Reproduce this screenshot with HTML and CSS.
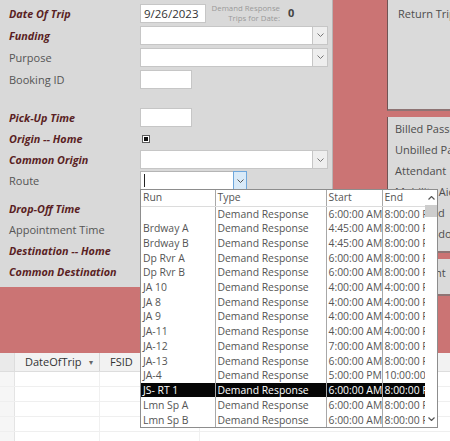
FILE: index.html
```html
<!DOCTYPE html>
<html lang="en">
<head>
  <meta charset="UTF-8" />
  <link rel="stylesheet" href="styles.css">
</head>
<body>
  <div class="screen">
    <div class="top">
      <div class="form-panel">
        <div class="row">
          <div class="lbl req">Date Of Trip</div>
          <div class="textbox date">9/26/2023</div>
          <div class="count-note">Demand Response<br>Trips for Date:</div>
          <div class="count">0</div>
        </div>
        <div class="row">
          <div class="lbl req">Funding</div>
          <div class="combo wide"><span class="combo-text"></span><span class="combo-btn"><svg width="7" height="4" viewBox="0 0 7 4"><polyline points="0.5,0.5 3.5,3.5 6.5,0.5" fill="none" stroke="#777" stroke-width="1"/></svg></span></div>
        </div>
        <div class="row">
          <div class="lbl">Purpose</div>
          <div class="combo wide"><span class="combo-text"></span><span class="combo-btn"><svg width="7" height="4" viewBox="0 0 7 4"><polyline points="0.5,0.5 3.5,3.5 6.5,0.5" fill="none" stroke="#777" stroke-width="1"/></svg></span></div>
        </div>
        <div class="row">
          <div class="lbl">Booking ID</div>
          <div class="textbox small"></div>
        </div>
        <div class="spacer-lg"></div>
        <div class="row short">
          <div class="lbl req">Pick-Up Time</div>
          <div class="textbox small"></div>
        </div>
        <div class="row short">
          <div class="lbl req">Origin -- Home</div>
          <div class="check"><span></span></div>
        </div>
        <div class="row short">
          <div class="lbl req">Common Origin</div>
          <div class="combo wide"><span class="combo-text"></span><span class="combo-btn"><svg width="7" height="4" viewBox="0 0 7 4"><polyline points="0.5,0.5 3.5,3.5 6.5,0.5" fill="none" stroke="#777" stroke-width="1"/></svg></span></div>
        </div>
        <div class="row short">
          <div class="lbl">Route</div>
          <div class="combo route"><span class="combo-text"><i class="caret"></i></span><span class="combo-btn active"><svg width="7" height="4" viewBox="0 0 7 4"><polyline points="0.5,0.5 3.5,3.5 6.5,0.5" fill="none" stroke="#555" stroke-width="1"/></svg></span></div>
        </div>
        <div class="spacer-sm"></div>
        <div class="row short">
          <div class="lbl req">Drop-Off Time</div>
          <div class="textbox small"></div>
        </div>
        <div class="row short">
          <div class="lbl">Appointment Time</div>
          <div class="textbox small"></div>
        </div>
        <div class="row short">
          <div class="lbl req">Destination -- Home</div>
          <div class="check"><span></span></div>
        </div>
        <div class="row short">
          <div class="lbl req">Common Destination</div>
          <div class="combo wide"></div>
        </div>
      </div>

      <div class="side">
        <div class="side-box return">Return Trip</div>
        <div class="side-box billing">
          <div class="side-line">Billed Passengers</div>
          <div class="side-line">Unbilled Passengers</div>
          <div class="side-line">Attendant</div>
          <div class="side-line">Mobility Aid</div>
          <div class="side-line">Cancelled</div>
          <div class="side-line">Door-to-door</div>
        </div>
        <div class="side-box notes">
          <div class="side-line">Comment</div>
        </div>
      </div>
    </div>

    <!-- datasheet under the form -->
    <div class="datasheet">
      <div class="ds-head">
        <div class="ds-sel"></div>
        <div class="ds-col first">DateOfTrip <span class="ds-arrow">&#9662;</span></div>
        <div class="ds-col">FSID</div>
        <div class="ds-col">TripID</div>
        <div class="ds-col last">Stop</div>
      </div>
      <div class="ds-row"><div class="ds-sel"></div><div class="ds-cell first"></div><div class="ds-cell"></div></div>
      <div class="ds-row"><div class="ds-sel"></div><div class="ds-cell first"></div><div class="ds-cell"></div></div>
      <div class="ds-row"><div class="ds-sel"></div><div class="ds-cell first"></div><div class="ds-cell"></div></div>
      <div class="ds-row"><div class="ds-sel"></div><div class="ds-cell first"></div><div class="ds-cell"></div></div>
      <div class="ds-row"><div class="ds-sel"></div><div class="ds-cell first"></div><div class="ds-cell"></div></div>
    </div>

    <!-- open Route drop-down -->
    <div class="route-list">
      <table class="runs">
        <colgroup><col class="c-run"><col class="c-type"><col class="c-start"><col class="c-end"></colgroup>
        <thead>
          <tr><th>Run</th><th>Type</th><th>Start</th><th>End</th></tr>
        </thead>
        <tbody>
          <tr><td></td><td>Demand Response</td><td>6:00:00 AM</td><td>8:00:00 PM</td></tr>
          <tr><td>Brdway A</td><td>Demand Response</td><td>4:45:00 AM</td><td>8:00:00 PM</td></tr>
          <tr><td>Brdway B</td><td>Demand Response</td><td>4:45:00 AM</td><td>8:00:00 PM</td></tr>
          <tr><td>Dp Rvr A</td><td>Demand Response</td><td>6:00:00 AM</td><td>8:00:00 PM</td></tr>
          <tr><td>Dp Rvr B</td><td>Demand Response</td><td>6:00:00 AM</td><td>8:00:00 PM</td></tr>
          <tr><td>JA 10</td><td>Demand Response</td><td>4:00:00 AM</td><td>4:00:00 PM</td></tr>
          <tr><td>JA 8</td><td>Demand Response</td><td>4:00:00 AM</td><td>4:00:00 PM</td></tr>
          <tr><td>JA 9</td><td>Demand Response</td><td>4:00:00 AM</td><td>4:00:00 PM</td></tr>
          <tr><td>JA-11</td><td>Demand Response</td><td>4:00:00 AM</td><td>4:00:00 PM</td></tr>
          <tr><td>JA-12</td><td>Demand Response</td><td>7:00:00 AM</td><td>8:00:00 PM</td></tr>
          <tr><td>JA-13</td><td>Demand Response</td><td>6:00:00 AM</td><td>8:00:00 PM</td></tr>
          <tr><td>JA-4</td><td>Demand Response</td><td>5:00:00 PM</td><td>10:00:00 PM</td></tr>
          <tr class="selected"><td>JS- RT 1</td><td>Demand Response</td><td>6:00:00 AM</td><td>8:00:00 PM</td></tr>
          <tr><td>Lmn Sp A</td><td>Demand Response</td><td>6:00:00 AM</td><td>8:00:00 PM</td></tr>
          <tr><td>Lmn Sp B</td><td>Demand Response</td><td>6:00:00 AM</td><td>8:00:00 PM</td></tr>
        </tbody>
      </table>
      <div class="scrollbar">
        <svg class="sb-up" width="7" height="4" viewBox="0 0 7 4"><polyline points="0.5,3.5 3.5,0.5 6.5,3.5" fill="none" stroke="#555" stroke-width="1.2"/></svg>
        <div class="sb-thumb"></div>
        <svg class="sb-down" width="7" height="4" viewBox="0 0 7 4"><polyline points="0.5,0.5 3.5,3.5 6.5,0.5" fill="none" stroke="#555" stroke-width="1.2"/></svg>
      </div>
    </div>
  </div>
</body>
</html>
```

FILE: styles.css
```css
* {
  box-sizing: border-box;
}

body {
  margin: 0;
  width: 450px;
  height: 441px;
  overflow: hidden;
  background-color: #ffffff;
  font-family: 'Open Sans', 'Noto Sans', sans-serif;
  font-size: 11px;
  color: #4a4a4a;
}

.screen {
  position: relative;
  width: 450px;
  height: 441px;
  overflow: hidden;
}

.top {
  display: flex;
  align-items: flex-start;
  height: 353px;
  background-color: #cb7474;
}

/* left form */
.form-panel {
  width: 333px;
  height: 287px;
  flex-shrink: 0;
  background-color: #d9d9d9;
  border-right: 1px solid #b9b3b3;
  padding-top: 2px;
}

.row {
  display: flex;
  align-items: center;
  height: 22px;
}

.row.short {
  height: 21px;
}

.spacer-lg {
  height: 17px;
}

.spacer-sm {
  height: 7px;
}

.lbl {
  width: 140px;
  flex-shrink: 0;
  padding-left: 9px;
  color: #555555;
  white-space: nowrap;
}

.lbl.req {
  font-weight: 700;
  font-style: italic;
  color: #5a1f24;
  font-size: 10.8px;
}

.textbox {
  height: 19px;
  background-color: #ffffff;
  border: 1px solid #c6c6c6;
  padding: 1px 3px;
  color: #333333;
  line-height: 16px;
}

.textbox.date {
  width: 66px;
  font-size: 11.5px;
}

.textbox.small {
  width: 52px;
}

.count-note {
  width: 72px;
  margin-left: 2px;
  font-size: 7.8px;
  line-height: 10px;
  text-align: right;
  color: #9a9a9a;
}

.count {
  margin-left: 8px;
  font-weight: 700;
  color: #444444;
  padding-bottom: 2px;
}

.combo {
  display: flex;
  height: 19px;
  background-color: #ffffff;
  border: 1px solid #c6c6c6;
}

.combo.wide {
  width: 188px;
}

.combo.route {
  width: 107px;
  height: 20px;
  border-color: #b5b5b5;
}

.combo-text {
  flex: 1;
  display: flex;
  align-items: center;
  padding-left: 3px;
}

.caret {
  display: block;
  width: 1px;
  height: 13px;
  background-color: #222222;
}

.combo-btn {
  width: 15px;
  display: flex;
  align-items: center;
  justify-content: center;
  background-color: #eeeeee;
  border-left: 1px solid #c6c6c6;
}

.combo-btn.active {
  width: 14px;
  background-color: #d9eaf8;
  border: 1px solid #6ea7dc;
  margin: -1px -1px -1px 0;
}

.check {
  width: 8px;
  height: 8px;
  margin-left: 2px;
  border: 1px solid #5c5c5c;
  background-color: #ffffff;
  padding: 1px;
}

.check span {
  display: block;
  width: 100%;
  height: 100%;
  background-color: #111111;
}

/* right side sub-form boxes */
.side {
  margin-left: 54px;
  width: 63px;
  display: flex;
  flex-direction: column;
  gap: 6px;
}

.side-box {
  background-color: #dadada;
  border-left: 1px solid #6f5454;
  border-bottom: 2px solid #8e7474;
  white-space: nowrap;
  overflow: hidden;
  color: #4d4d4d;
}

.side-box.return {
  height: 111px;
  padding: 6px 0 0 10px;
}

.side-box.billing {
  height: 136px;
  padding: 1px 0 0 7px;
}

.side-box.notes {
  height: 37px;
  padding: 3px 0 0 7px;
}

.side-line {
  height: 21px;
  line-height: 21px;
}

/* bottom datasheet */
.datasheet {
  height: 88px;
  background-color: #ffffff;
}

.ds-head {
  display: flex;
  height: 19px;
  background-color: #f2f2f2;
  border-bottom: 1px solid #dddddd;
  color: #333333;
}

.ds-sel {
  width: 15px;
  flex-shrink: 0;
  background-color: #eaeaea;
  border-right: 1px solid #dddddd;
}

.ds-col {
  width: 100px;
  flex-shrink: 0;
  line-height: 18px;
  padding-left: 10px;
  border-right: 1px solid #d6d6d6;
  white-space: nowrap;
}

.ds-col.first {
  width: 85px;
  display: flex;
  justify-content: space-between;
  padding-right: 6px;
}

.ds-col.last {
  padding-left: 14px;
  border-right: none;
}

.ds-arrow {
  font-size: 8px;
  color: #666666;
}

.ds-row {
  display: flex;
  height: 15px;
  border-bottom: 1px solid #efefef;
}

.ds-row .ds-sel {
  background-color: #f6f6f6;
  border-right: 1px solid #e4e4e4;
}

.ds-cell {
  width: 100px;
  border-right: 1px solid #f0f0f0;
}

.ds-cell.first {
  width: 85px;
}

/* route drop-down list */
.route-list {
  position: absolute;
  left: 140px;
  top: 189px;
  width: 298px;
  height: 239px;
  display: flex;
  background-color: #ffffff;
  border: 1px solid #8d8d8d;
  font-size: 10.4px;
}

.runs {
  width: 284px;
  table-layout: fixed;
  border-collapse: collapse;
  color: #555555;
}

.c-run { width: 74px; }
.c-type { width: 111px; }
.c-start { width: 56px; }
.c-end { width: 43px; }

.runs th,
.runs td {
  padding: 0 0 0 2px;
  text-align: left;
  font-weight: 400;
  white-space: nowrap;
  overflow: hidden;
  border-left: 1px solid #a8a8a8;
}

.runs th:first-child,
.runs td:first-child {
  border-left: none;
}

.runs th {
  height: 16px;
  line-height: 15px;
  border-bottom: 1px solid #dcdcdc;
}

.runs td {
  height: 14.7px;
  line-height: 14px;
}

.runs tr.selected td {
  background-color: #050505;
  color: #ffffff;
}

.scrollbar {
  width: 12px;
  display: flex;
  flex-direction: column;
  align-items: center;
  background-color: #ffffff;
}

.sb-up {
  margin-top: 6px;
}

.sb-thumb {
  width: 12px;
  height: 12px;
  margin-top: 5px;
  background-color: #cdcdcd;
}

.sb-down {
  margin-top: auto;
  margin-bottom: 6px;
}
```
